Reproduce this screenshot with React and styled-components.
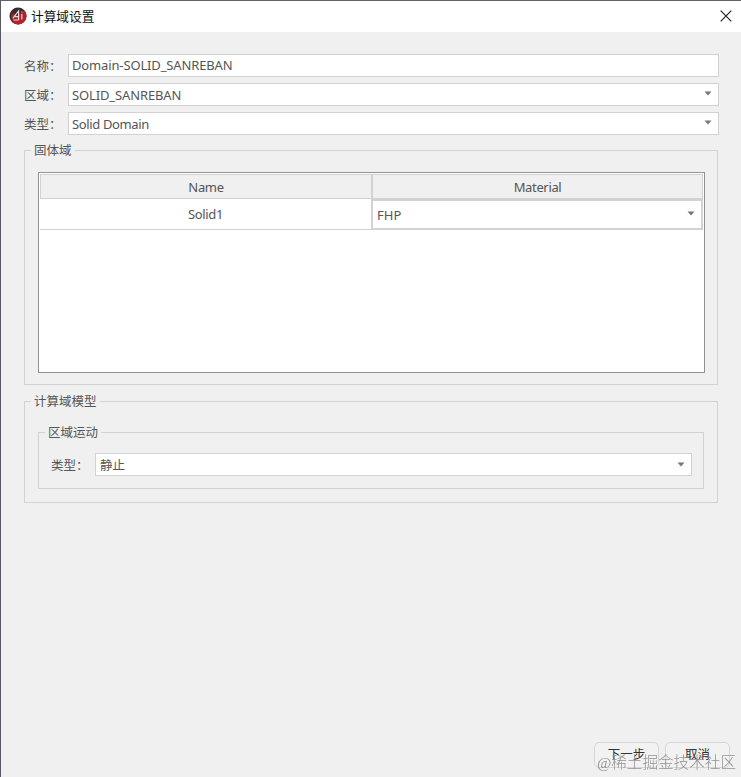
import React from "react";
import styled, { createGlobalStyle } from "styled-components";

const GlobalStyle = createGlobalStyle`
  * { box-sizing: border-box; }
  body {
    margin: 0;
    background: #f0f0f0;
    font-family: "Noto Sans", "Noto Sans CJK SC", sans-serif;
    font-size: 13px;
    color: #555;
  }
`;

const Dialog = styled.div`
  width: 741px;
  height: 777px;
  display: flex;
  flex-direction: column;
  border-top: 1px solid #646266;
  border-left: 1px solid #5c5866;
  background: #f0f0f0;
  overflow: hidden;
`;

const TitleBar = styled.header`
  flex: none;
  height: 31px;
  display: flex;
  align-items: center;
  padding: 0 9px 2px 8px;
  background: #fff;
  color: #111;
`;

const Title = styled.h1`
  flex: 1;
  margin: 0 0 0 4px;
  font: 400 12.7px/20px "Noto Sans CJK SC", sans-serif;
`;

const CloseButton = styled.button`
  display: flex;
  padding: 0;
  border: 0;
  background: none;
`;

const Content = styled.main`
  flex: 1;
  display: flex;
  flex-direction: column;
  padding: 22px 23px 0;
`;

const Form = styled.div`
  display: flex;
  flex-direction: column;
  gap: 6px;
  margin-right: -1px;
`;

const Field = styled.div`
  display: flex;
  align-items: center;
  height: 23px;
`;

const InsetField = styled(Field)`
  margin: 11px -2px 0 -1px;
  font-size: 12.5px;
`;

const Label = styled.label`
  flex: none;
  width: 44px;
  font: 12.5px/20px "Noto Sans CJK SC", sans-serif;
  white-space: nowrap;
`;

const Control = styled.div`
  flex: 1;
  display: flex;
  align-items: center;
  justify-content: space-between;
  height: ${(p) => p.$height || 23}px;
  padding: ${(p) => p.$shift || 0}px 6px 0 ${(p) => p.$left || 3}px;
  border: ${(p) => p.$border || 1}px solid #d2d2d2;
  background: #fff;
  letter-spacing: ${(p) => p.$spacing || 0}px;
  line-height: 20px;
`;

const NameInput = styled(Control)`
  padding-bottom: 2px;
`;

const ArrowIcon = styled.svg`
  margin-bottom: 2px;
`;

const Group = styled.section`
  margin-top: ${(p) => p.$top}px;
  height: ${(p) => p.$height}px;
  padding: 0 13px;
  border: 1px solid #d2d2d2;
`;

const Legend = styled.h2`
  width: fit-content;
  height: 20px;
  margin: -11px 0 0 -7px;
  padding: 0 3px;
  background: #f0f0f0;
  font: 400 12.5px/20px "Noto Sans CJK SC", sans-serif;
`;

const Table = styled.div`
  display: grid;
  grid-template-columns: 331px 1fr;
  grid-template-rows: 25px 31px;
  height: 201px;
  margin: 12px -1px 0 0;
  padding: 1px;
  border: 1px solid #929292;
  background: #fff;
  letter-spacing: -0.35px;
`;

const HeaderCell = styled.div`
  display: flex;
  align-items: center;
  justify-content: center;
  padding-top: 1px;
  border: 1px solid #d2d2d2;
  border-right-width: ${(p) => (p.$last ? 1 : 0)}px;
  border-left-width: ${(p) => (p.$last ? 2 : 1)}px;
  background: #f0f0f0;
`;

const Cell = styled.div`
  display: flex;
  align-items: center;
  justify-content: center;
  border-bottom: 1px solid #d2d2d2;
`;

const Actions = styled.footer`
  display: flex;
  justify-content: flex-end;
  gap: 6px;
  padding: 0 11px 9px;
`;

const Button = styled.button`
  width: 65px;
  height: 26px;
  padding: 0 0 2px;
  border: 1px solid #d6d6d6;
  border-radius: 5px;
  background: #f2f2f2;
  color: #333;
  font: 12.5px/20px "Noto Sans CJK SC", sans-serif;
`;

const Watermark = styled.div`
  position: fixed;
  right: 5px;
  bottom: 4px;
  color: #939393;
  font: 300 15.6px/20px "Liberation Serif", "Noto Sans CJK SC", serif;
  white-space: nowrap;
`;

const Logo = () => (
  <svg width="18" height="18" viewBox="0 0 18 18">
    <circle cx="9" cy="9" r="8.5" fill="#352b2e" />
    <path d="M15.5 3.5A8.5 8.5 0 0 1 3 15L9 8z" fill="#b5202c" />
    <path d="M3 6A7 7 0 0 0 4 14L8 8z" fill="#9c2630" />
    <path d="M3.8 11.3L9.6 4v9M5.5 9.6h4.3M12.8 7v5.6M12.8 4.4v1.2M4.3 13h5.3" fill="none" stroke="#ecd9db" strokeWidth="1.2" />
  </svg>
);

const Select = ({ children, ...rest }) => (
  <Control {...rest}>
    {children}
    <ArrowIcon width="8" height="5" viewBox="0 0 8 5">
      <path d="M0.5 0.4h7L4 4.6z" fill="#777" />
    </ArrowIcon>
  </Control>
);

export default function App() {
  return (
    <Dialog lang="zh-CN">
      <GlobalStyle />
      <TitleBar>
        <Logo />
        <Title>计算域设置</Title>
        <CloseButton aria-label="关闭">
          <svg width="12" height="12" viewBox="0 0 12 12">
            <path d="M0.7 0.7l10.6 10.6M11.3 0.7L0.7 11.3" stroke="#222" strokeWidth="1.2" />
          </svg>
        </CloseButton>
      </TitleBar>
      <Content>
        <Form>
          <Field>
            <Label>名称：</Label>
            <NameInput $spacing={-0.14}>Domain-SOLID_SANREBAN</NameInput>
          </Field>
          <Field>
            <Label>区域：</Label>
            <Select $spacing={-0.13}>SOLID_SANREBAN</Select>
          </Field>
          <Field>
            <Label>类型：</Label>
            <Select $spacing={-0.36}>Solid Domain</Select>
          </Field>
        </Form>
        <Group $top={15} $height={235}>
          <Legend>固体域</Legend>
          <Table>
            <HeaderCell>Name</HeaderCell>
            <HeaderCell $last>Material</HeaderCell>
            <Cell>Solid1</Cell>
            <Select $height={31} $border={2} $left={4}>FHP</Select>
          </Table>
        </Group>
        <Group $top={16} $height={102}>
          <Legend>计算域模型</Legend>
          <Group $top={21} $height={57}>
            <Legend>区域运动</Legend>
            <InsetField>
              <Label>类型：</Label>
              <Select $shift={2} $left={4}>静止</Select>
            </InsetField>
          </Group>
        </Group>
      </Content>
      <Actions>
        <Button>下一步</Button>
        <Button>取消</Button>
      </Actions>
      <Watermark>@稀土掘金技术社区</Watermark>
    </Dialog>
  );
}
